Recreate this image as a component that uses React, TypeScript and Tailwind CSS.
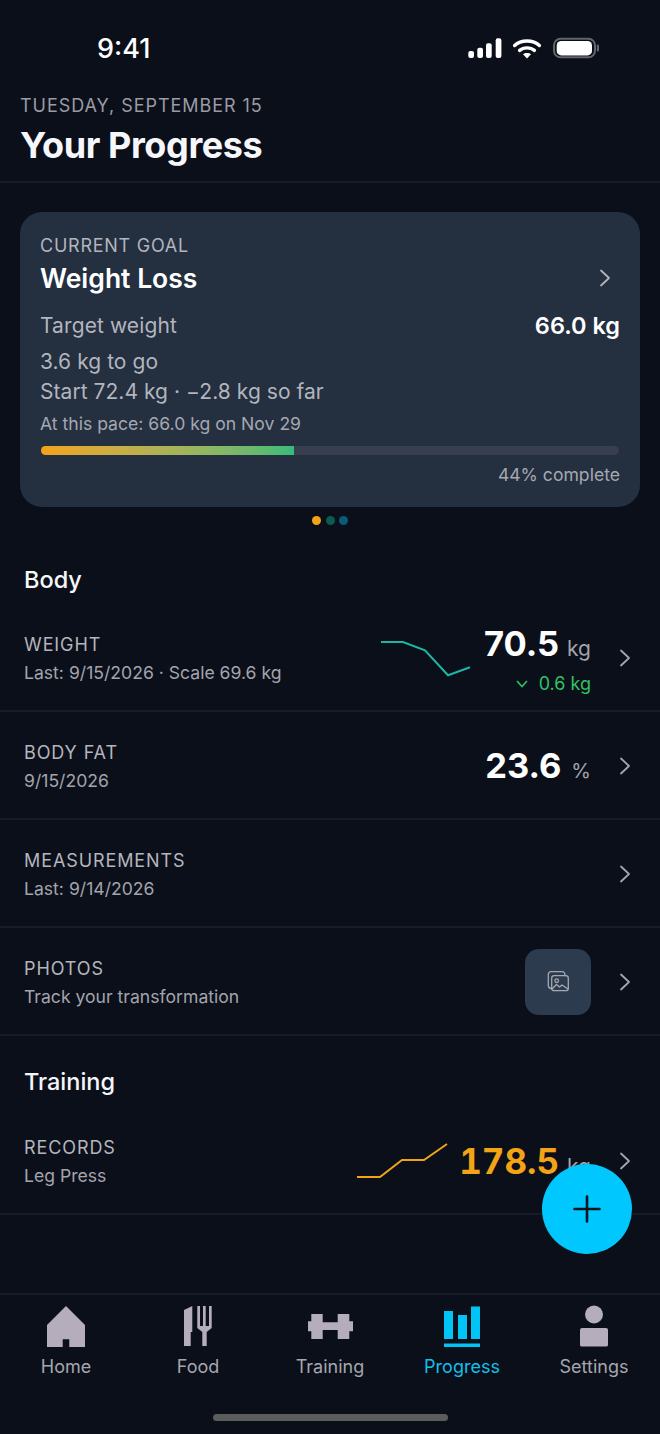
import React from "react";

const Chevron = ({ className = "" }: { className?: string }) => (
  <svg width="14" height="20" viewBox="0 0 14 20" fill="none" className={className}>
    <path d="M3 2.5 L11 10 L3 17.5" stroke="currentColor" strokeWidth="1.8" strokeLinecap="round" strokeLinejoin="round" />
  </svg>
);

const Row = ({ label, sub, right }: { label: string; sub: string; right?: React.ReactNode }) => (
  <div className="h-[108px] flex items-center border-b-2 border-[#171c27] pl-6 pr-7 pt-[2px]">
    <div className="flex-1 pt-[1px]">
      <div className="text-[18px] leading-[26px] tracking-[0.9px] text-[#b4b5bd]">{label}</div>
      <div className="mt-[2px] text-[17.6px] leading-[26px] text-[#a3a4ac]">{sub}</div>
    </div>
    {right}
    <Chevron className="ml-[27px] text-[#a5a6ad]" />
  </div>
);

const Tab = ({ icon, label, active }: { icon: React.ReactNode; label: string; active?: boolean }) => (
  <div className="flex flex-col items-center w-[132px]">
    <div className="h-[44px] flex items-center justify-center">{icon}</div>
    <div className={`mt-[6px] text-[18px] leading-[26px] ${active ? "text-[#13bfe8]" : "text-[#a6a7ae]"}`}>{label}</div>
  </div>
);

export default function App() {
  return (
    <div className="relative h-[1434px] w-[660px] overflow-hidden bg-[#0b0f1a] font-['Inter',sans-serif] flex flex-col">
      {/* Status bar */}
      <div className="h-[92px] flex items-start justify-between pt-[33px] pl-[97px] pr-[61px]">
        <div className="text-[27px] leading-[32px] font-medium text-white">9:41</div>
        <svg width="132" height="26" viewBox="0 0 132 26" className="mt-[1px]">
          <rect x="1.3" y="17" width="5.7" height="7" rx="2" fill="#fff" />
          <rect x="10.3" y="13.7" width="5.7" height="10.3" rx="2" fill="#fff" />
          <rect x="19" y="9.3" width="5.7" height="14.7" rx="2" fill="#fff" />
          <rect x="28.7" y="4.3" width="5.7" height="19.7" rx="2" fill="#fff" />
          <path d="M47.6 11.5 C54 5.4 66 5.4 72.4 11.5" stroke="#fff" strokeWidth="3.4" fill="none" strokeLinecap="round" />
          <path d="M52.6 16.4 C56.5 13 63.5 13 67.4 16.4" stroke="#fff" strokeWidth="3.4" fill="none" strokeLinecap="round" />
          <path d="M56 20.2 L60 24.5 L64 20.2 C62 18.7 58 18.7 56 20.2 Z" fill="#fff" />
          <rect x="87" y="4.7" width="41" height="18.6" rx="6.5" fill="none" stroke="#63656d" strokeWidth="2" />
          <rect x="89.7" y="7" width="35.3" height="14.4" rx="4.5" fill="#fff" />
          <rect x="129.8" y="10.5" width="2.2" height="7" rx="1.1" fill="#63656d" />
        </svg>
      </div>

      {/* Header */}
      <div className="h-[91px] border-b-2 border-[#171c27] px-5 pt-[1px]">
        <div className="text-[18px] leading-[26px] tracking-[0.95px] text-[#9a9ba4]">TUESDAY, SEPTEMBER 15</div>
        <div className="mt-[5px] text-[36px] leading-[42px] font-bold tracking-[-0.4px] text-[#f6f7fa]">Your Progress</div>
      </div>

      {/* Goal card */}
      <div className="mx-5 mt-[29px] h-[295px] rounded-[22px] bg-[#242f40] px-5 pt-[21px]">
        <div className="text-[18px] leading-[26px] tracking-[0.75px] text-[#b2b5bd]">CURRENT GOAL</div>
        <div className="mt-[2px] flex items-center justify-between">
          <div className="text-[26.5px] leading-[34px] font-semibold text-white">Weight Loss</div>
          <Chevron className="mr-[8px] text-[#b2b5bd]" />
        </div>
        <div className="mt-[16px] flex items-center justify-between">
          <div className="text-[21px] leading-[30px] tracking-[0.1px] text-[#b2b5bd]">Target weight</div>
          <div className="text-[23.5px] leading-[30px] font-semibold text-white">66.0 kg</div>
        </div>
        <div className="mt-[6px] text-[21px] leading-[30px] tracking-[0.05px] text-[#b2b5bd]">3.6 kg to go</div>
        <div className="text-[21px] leading-[30px] tracking-[0.05px] text-[#b2b5bd]">Start 72.4 kg · −2.8 kg so far</div>
        <div className="mt-[4px] text-[17.6px] leading-[26px] text-[#a5a8b1]">At this pace: 66.0 kg on Nov 29</div>
        <div className="mt-[9px] mx-[1px] h-[9px] rounded-full bg-[#373f4f] overflow-hidden">
          <div className="h-full w-[43.8%] bg-gradient-to-r from-[#f2a316] to-[#35bb78]" />
        </div>
        <div className="mt-[7px] text-right text-[17.6px] leading-[26px] text-[#a5a8b1]">44% complete</div>
      </div>

      {/* Dots */}
      <div className="mt-[9px] h-[9px] flex justify-center gap-[4.5px]">
        <div className="h-[9px] w-[9px] rounded-full bg-[#f2a316]" />
        <div className="h-[9px] w-[9px] rounded-full bg-[#0d5a50]" />
        <div className="h-[9px] w-[9px] rounded-full bg-[#0b5a7a]" />
      </div>

      {/* Body */}
      <div className="mt-[41px] mb-[10px] pl-6 h-[28px] text-[23.5px] leading-[28px] font-medium text-[#f5f6f9]">Body</div>
      <Row
        label="WEIGHT"
        sub="Last: 9/15/2026 · Scale 69.6 kg"
        right={
          <div className="flex items-center">
            <svg width="92" height="40" viewBox="0 0 92 40" fill="none" className="mr-[12px]">
              <polyline points="1,4 23,4 45,12.3 68,37.3 90,29.3" stroke="#1fb5a3" strokeWidth="2" />
            </svg>
            <div className="flex flex-col items-end pt-[3px]">
              <div className="flex items-baseline">
                <span className="text-[34.5px] leading-[44px] font-bold text-white">70.5</span>
                <span className="ml-[8px] text-[21px] text-[#a3a4ac]">kg</span>
              </div>
              <div className="mt-[5px] flex items-center text-[#31c265] text-[18px] leading-[26px]">
                <svg width="14" height="10" viewBox="0 0 14 10" fill="none" className="mr-[10px]">
                  <path d="M2 2 L7 7.5 L12 2" stroke="currentColor" strokeWidth="1.6" />
                </svg>
                0.6 kg
              </div>
            </div>
          </div>
        }
      />
      <Row
        label="BODY FAT"
        sub="9/15/2026"
        right={
          <div className="flex items-baseline">
            <span className="text-[34.5px] leading-[44px] font-bold text-white">23.6</span>
            <span className="ml-[10px] text-[20px] text-[#a3a4ac]">%</span>
          </div>
        }
      />
      <Row label="MEASUREMENTS" sub="Last: 9/14/2026" />
      <Row
        label="PHOTOS"
        sub="Track your transformation"
        right={
          <div className="h-[66px] w-[66px] rounded-[14px] bg-[#2c3b4e] flex items-center justify-center">
            <svg width="22" height="22" viewBox="0 0 22 22" fill="none" stroke="#a5a8b1" strokeWidth="1.3" strokeLinejoin="round" strokeLinecap="round">
              <path d="M4.7 17.5 C2.5 17.5 1.3 16 1.3 14.5 V3.5 C1.3 2 2.5 0.7 4 0.7 H15 C17 0.7 18 2 18 4.7" />
              <rect x="4.7" y="4.7" width="16.6" height="15" rx="2.5" />
              <circle cx="9.7" cy="9.7" r="1.8" />
              <path d="M5 18 L9.5 13.5 L12.5 16 L15 14 L21 18" />
            </svg>
          </div>
        }
      />

      {/* Training */}
      <div className="mt-[32px] mb-[11px] pl-6 h-[28px] text-[23.5px] leading-[28px] font-medium text-[#f5f6f9]">Training</div>
      <Row
        label="RECORDS"
        sub="Leg Press"
        right={
          <div className="flex items-center">
            <svg width="92" height="38" viewBox="0 0 92 38" fill="none" className="mr-[11px]">
              <polyline points="1,35 24,35 46,18 68,18 91,2" stroke="#f2a316" strokeWidth="2" />
            </svg>
            <div className="flex items-baseline">
              <span className="text-[35px] leading-[44px] font-bold tabular-nums text-[#f2a316]">178.5</span>
              <span className="ml-[8px] text-[21px] text-[#a3a4ac]">kg</span>
            </div>
          </div>
        }
      />

      {/* Tab bar */}
      <div className="mt-auto h-[141px] border-t-2 border-[#171c27] relative">
        <div className="flex pt-[9px]">
          <Tab
            label="Home"
            icon={
              <svg width="38" height="41" viewBox="0 0 38 41" fill="#b5adbb">
                <path d="M19 0 L38 19 V41 H22.3 V33.3 H15.7 V41 H0 V19 Z" />
              </svg>
            }
          />
          <Tab
            label="Food"
            icon={
              <svg width="28" height="40" viewBox="0 0 28 40" fill="#b5adbb">
                <path d="M8.3 0 V26 H6.7 V40 H0 V4 Z" />
                <path d="M13.3 0 H16 V20 H19 V0 H21.7 V20 H25 V0 H27.7 V22 L22.7 26 V40 H18.3 V26 L13.3 22 Z" />
              </svg>
            }
          />
          <Tab
            label="Training"
            icon={
              <svg width="45" height="25" viewBox="0 0 45 25" fill="#b5adbb">
                <path d="M0 7.3 H3.3 V0 H14.7 V8.3 H29.7 V0 H41.3 V7.3 H45 V17.3 H41.3 V25 H29.7 V16 H14.7 V25 H3.3 V17.3 H0 Z" />
              </svg>
            }
          />
          <Tab
            label="Progress"
            active
            icon={
              <svg width="36" height="41" viewBox="0 0 36 41" fill="#00c4f5">
                <rect x="0" y="5" width="9" height="28" />
                <rect x="14" y="9" width="9" height="24" />
                <rect x="27" y="0.5" width="9" height="32.5" />
                <rect x="0" y="37.5" width="36" height="3.5" />
              </svg>
            }
          />
          <Tab
            label="Settings"
            icon={
              <svg width="30" height="42" viewBox="0 0 30 42" fill="#b5adbb">
                <circle cx="15" cy="9.5" r="9" />
                <path d="M3 23 H27 Q29 23 29 25 V40 Q29 41.5 27 41.5 H3 Q1 41.5 1 40 V25 Q1 23 3 23 Z" />
              </svg>
            }
          />
        </div>
        <div className="absolute bottom-[13px] left-[213px] h-[7px] w-[235px] rounded-full bg-[#5b5c5b]" />
      </div>

      {/* FAB */}
      <div className="absolute left-[542px] top-[1164px] h-[90px] w-[90px] rounded-full bg-[#00c8ff] flex items-center justify-center">
        <svg width="28" height="28" viewBox="0 0 28 28" fill="none" stroke="#0a1420" strokeWidth="2.6" strokeLinecap="round">
          <path d="M14 1.5 V26.5 M1.5 14 H26.5" />
        </svg>
      </div>
    </div>
  );
}
